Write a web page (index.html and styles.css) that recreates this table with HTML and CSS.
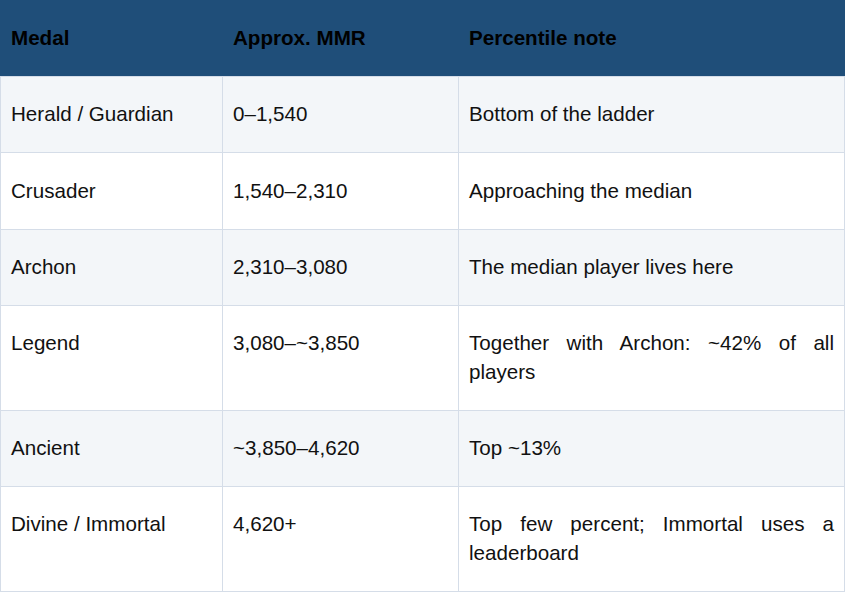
FILE: index.html
```html
<!DOCTYPE html>
<html lang="en">
<head>
<meta charset="utf-8">
<title>Medal MMR table</title>
<link rel="stylesheet" href="styles.css">
</head>
<body>
<table class="ranks">
  <colgroup>
    <col class="c-medal">
    <col class="c-mmr">
    <col class="c-note">
  </colgroup>
  <thead>
    <tr><th>Medal</th><th>Approx. MMR</th><th>Percentile note</th></tr>
  </thead>
  <tbody>
    <tr><td>Herald / Guardian</td><td>0–1,540</td><td>Bottom of the ladder</td></tr>
    <tr><td>Crusader</td><td>1,540–2,310</td><td>Approaching the median</td></tr>
    <tr><td>Archon</td><td>2,310–3,080</td><td>The median player lives here</td></tr>
    <tr><td>Legend</td><td>3,080–~3,850</td><td>Together with Archon: ~42% of all players</td></tr>
    <tr><td>Ancient</td><td>~3,850–4,620</td><td>Top ~13%</td></tr>
    <tr><td>Divine / Immortal</td><td>4,620+</td><td>Top few percent; Immortal uses a leaderboard</td></tr>
  </tbody>
</table>
</body>
</html>
```
FILE: styles.css
```css
html, body {
  margin: 0;
  padding: 0;
  background: #ffffff;
}
body {
  font-family: "Liberation Sans", Arial, sans-serif;
  font-size: 20.6px;
  line-height: 28.8px;
  color: #111111;
}
.ranks {
  width: 844px;
  border-collapse: collapse;
  table-layout: fixed;
}
.c-medal { width: 222px; }
.c-mmr { width: 236px; }
.c-note { width: 386px; }
.ranks th,
.ranks td {
  padding: 23.2px 10px;
  text-align: justify;
  vertical-align: top;
}
.ranks th {
  background: #1f4e79;
  color: #000000;
  font-weight: bold;
  text-align: left;
  border: 1px solid #1f4e79;
  border-bottom: 1px solid #d5dde8;
}
.ranks td {
  border: 1px solid #d5dde8;
}
.ranks tbody tr:nth-child(odd) td {
  background: #f3f6f9;
}
.ranks tbody tr:nth-child(even) td {
  background: #ffffff;
}
```
